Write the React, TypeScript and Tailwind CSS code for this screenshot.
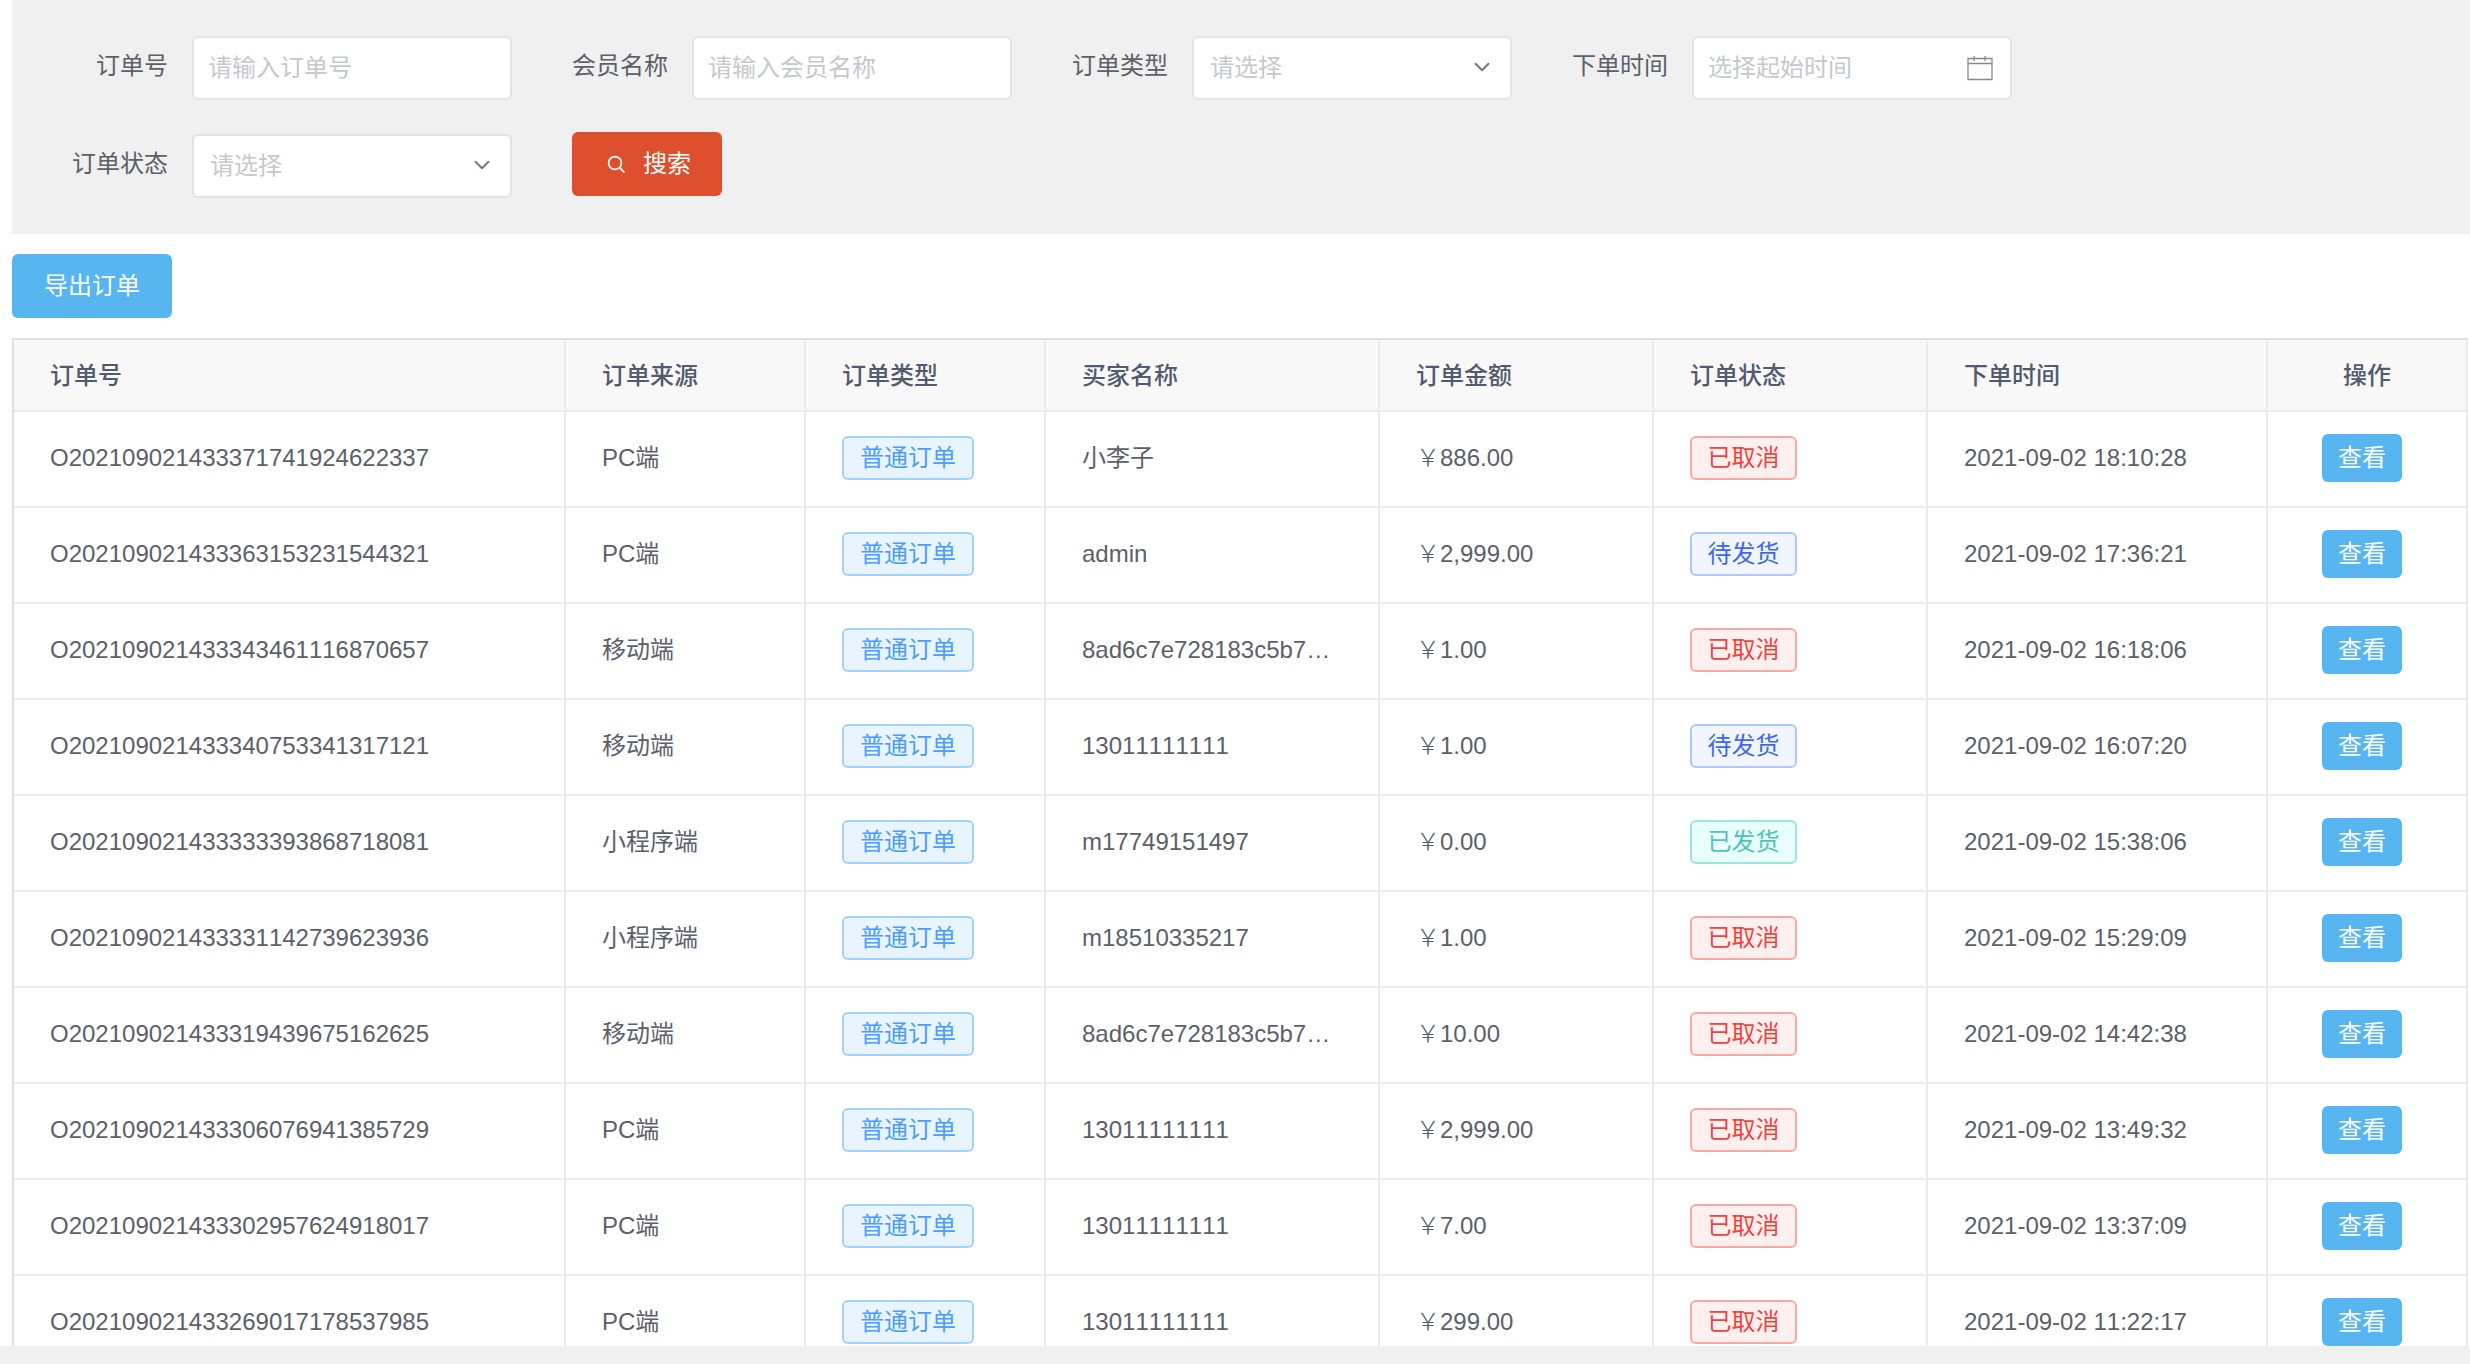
import { ChevronDown } from "lucide-react"

type Status = "已取消" | "待发货" | "已发货"

interface Order {
  no: string
  source: string
  buyer: string
  amount: string
  status: Status
  time: string
}

const orders: Order[] = [
  { no: "O202109021433371741924622337", source: "PC端", buyer: "小李子", amount: "886.00", status: "已取消", time: "2021-09-02 18:10:28" },
  { no: "O202109021433363153231544321", source: "PC端", buyer: "admin", amount: "2,999.00", status: "待发货", time: "2021-09-02 17:36:21" },
  { no: "O202109021433343461116870657", source: "移动端", buyer: "8ad6c7e728183c5b7…", amount: "1.00", status: "已取消", time: "2021-09-02 16:18:06" },
  { no: "O202109021433340753341317121", source: "移动端", buyer: "13011111111", amount: "1.00", status: "待发货", time: "2021-09-02 16:07:20" },
  { no: "O202109021433333393868718081", source: "小程序端", buyer: "m17749151497", amount: "0.00", status: "已发货", time: "2021-09-02 15:38:06" },
  { no: "O202109021433331142739623936", source: "小程序端", buyer: "m18510335217", amount: "1.00", status: "已取消", time: "2021-09-02 15:29:09" },
  { no: "O202109021433319439675162625", source: "移动端", buyer: "8ad6c7e728183c5b7…", amount: "10.00", status: "已取消", time: "2021-09-02 14:42:38" },
  { no: "O202109021433306076941385729", source: "PC端", buyer: "13011111111", amount: "2,999.00", status: "已取消", time: "2021-09-02 13:49:32" },
  { no: "O202109021433302957624918017", source: "PC端", buyer: "13011111111", amount: "7.00", status: "已取消", time: "2021-09-02 13:37:09" },
  { no: "O202109021433269017178537985", source: "PC端", buyer: "13011111111", amount: "299.00", status: "已取消", time: "2021-09-02 11:22:17" },
]

const statusStyles: Record<Status, string> = {
  已取消: "border-[#f6a8a3] bg-[#fef0ef] text-[#ef4444]",
  待发货: "border-[#adc6ff] bg-[#f0f5ff] text-[#3f67e8]",
  已发货: "border-[#9ae8dc] bg-[#e8fffb] text-[#4fc4b6]",
}

const headers = ["订单号", "订单来源", "订单类型", "买家名称", "订单金额", "订单状态", "下单时间"]

const cell = "border-r-2 border-b-2 border-[#ebebeb] pb-[2px] pl-[36px] whitespace-nowrap"

interface FieldProps {
  label: string
  placeholder: string
  select?: boolean
  icon?: React.ReactNode
}

function Field({ label, placeholder, select, icon }: FieldProps) {
  return (
    <div className="flex items-center">
      <label className="w-[120px] pr-6 pb-1 text-right whitespace-nowrap text-[#5c6069]">{label}</label>
      <div className="relative h-16 w-80 rounded-[6px] border-2 border-[#e1e2e8] bg-white">
        <input
          readOnly
          placeholder={placeholder}
          className={`h-full w-full rounded-[6px] bg-transparent outline-none placeholder:text-[#c6c8ce] ${select ? "pl-4" : "pl-[14px]"}`}
        />
        {select && <ChevronDown className="absolute top-4 right-[15px] size-[26px] text-[#70778a]" strokeWidth={1.8} />}
        {icon}
      </div>
    </div>
  )
}

const calendar = (
  <svg viewBox="0 0 26 26" fill="none" stroke="#858a96" strokeWidth="1.3" className="absolute top-[17px] right-[17px] size-[26px]">
    <path d="M1 3.5h24v21H1zM1 8.5h24M7 1v5M18 1v5" />
  </svg>
)

export default function App() {
  return (
    <div className="flex h-[1364px] flex-col overflow-hidden bg-white font-['Liberation_Sans','Noto_Sans_CJK_SC',sans-serif] text-[24px] text-[#5c6069] [font-kerning:none]">
      <div className="ml-3 flex h-[234px] shrink-0 flex-col gap-8 bg-[#f0f0f0] pt-9 pl-[60px]">
        <div className="flex gap-x-[60px]">
          <Field label="订单号" placeholder="请输入订单号" />
          <Field label="会员名称" placeholder="请输入会员名称" />
          <Field label="订单类型" placeholder="请选择" select />
          <Field label="下单时间" placeholder="选择起始时间" icon={calendar} />
        </div>
        <div className="flex items-start gap-x-[60px]">
          <div className="mt-[2px]">
            <Field label="订单状态" placeholder="请选择" select />
          </div>
          <button className="flex h-16 w-[150px] items-center justify-center gap-[18px] rounded-[6px] bg-[#dd4f2d] pl-1 text-white">
            <svg viewBox="0 0 18 18" fill="none" stroke="currentColor" strokeWidth="1.7" strokeLinecap="round" className="size-[18px]">
              <circle cx="8" cy="8" r="6.4" />
              <path d="M12.6 12.6l4.4 4.4" />
            </svg>
            搜索
          </button>
        </div>
      </div>

      <button className="mt-5 ml-3 h-16 w-40 shrink-0 rounded-[6px] bg-[#57b5f0] text-white">导出订单</button>

      <div className="mt-5 ml-3 w-[2456px] min-h-0 flex-1 overflow-hidden border-t-2 border-l-2 border-[#dfe0e6]">
        <table className="w-full table-fixed border-separate border-spacing-0">
          <colgroup>
            <col className="w-[552px]" />
            <col className="w-[240px]" />
            <col className="w-[240px]" />
            <col className="w-[334px]" />
            <col className="w-[274px]" />
            <col className="w-[274px]" />
            <col className="w-[340px]" />
            <col className="w-[200px]" />
          </colgroup>
          <thead>
            <tr className="h-[72px] bg-[#f8f8f8] text-[#515a6e]">
              {headers.map((h) => (
                <th key={h} className="border-r-2 border-b-2 border-[#ebebeb] pt-[2px] pr-2 pl-[36px] text-left font-medium">
                  {h}
                </th>
              ))}
              <th className="border-r-2 border-b-2 border-[#ebebeb] pt-[2px] text-center font-medium">操作</th>
            </tr>
          </thead>
          <tbody>
            {orders.map((o) => (
              <tr key={o.no} className="h-[96px]">
                <td className={cell}>{o.no}</td>
                <td className={cell}>{o.source}</td>
                <td className={cell}>
                  <span className="flex h-[44px] w-[132px] items-center justify-center rounded-[6px] border-2 border-[#a3d3ff] bg-[#e8f4ff] text-[#4a9dff]">
                    普通订单
                  </span>
                </td>
                <td className={cell}>{o.buyer}</td>
                <td className={cell}>
                  <span className="font-light">￥</span>
                  {o.amount}
                </td>
                <td className={cell}>
                  <span className={`flex h-[44px] w-[107px] items-center justify-center rounded-[6px] border-2 ${statusStyles[o.status]}`}>
                    {o.status}
                  </span>
                </td>
                <td className={cell}>{o.time}</td>
                <td className="border-r-2 border-b-2 border-[#ebebeb] pb-[2px] pl-[54px]">
                  <button className="h-12 w-20 rounded-[6px] bg-[#57b5f0] text-white">查看</button>
                </td>
              </tr>
            ))}
          </tbody>
        </table>
      </div>

      <div className="h-[18px] shrink-0 bg-[#f0f0f0]" />
    </div>
  )
}
